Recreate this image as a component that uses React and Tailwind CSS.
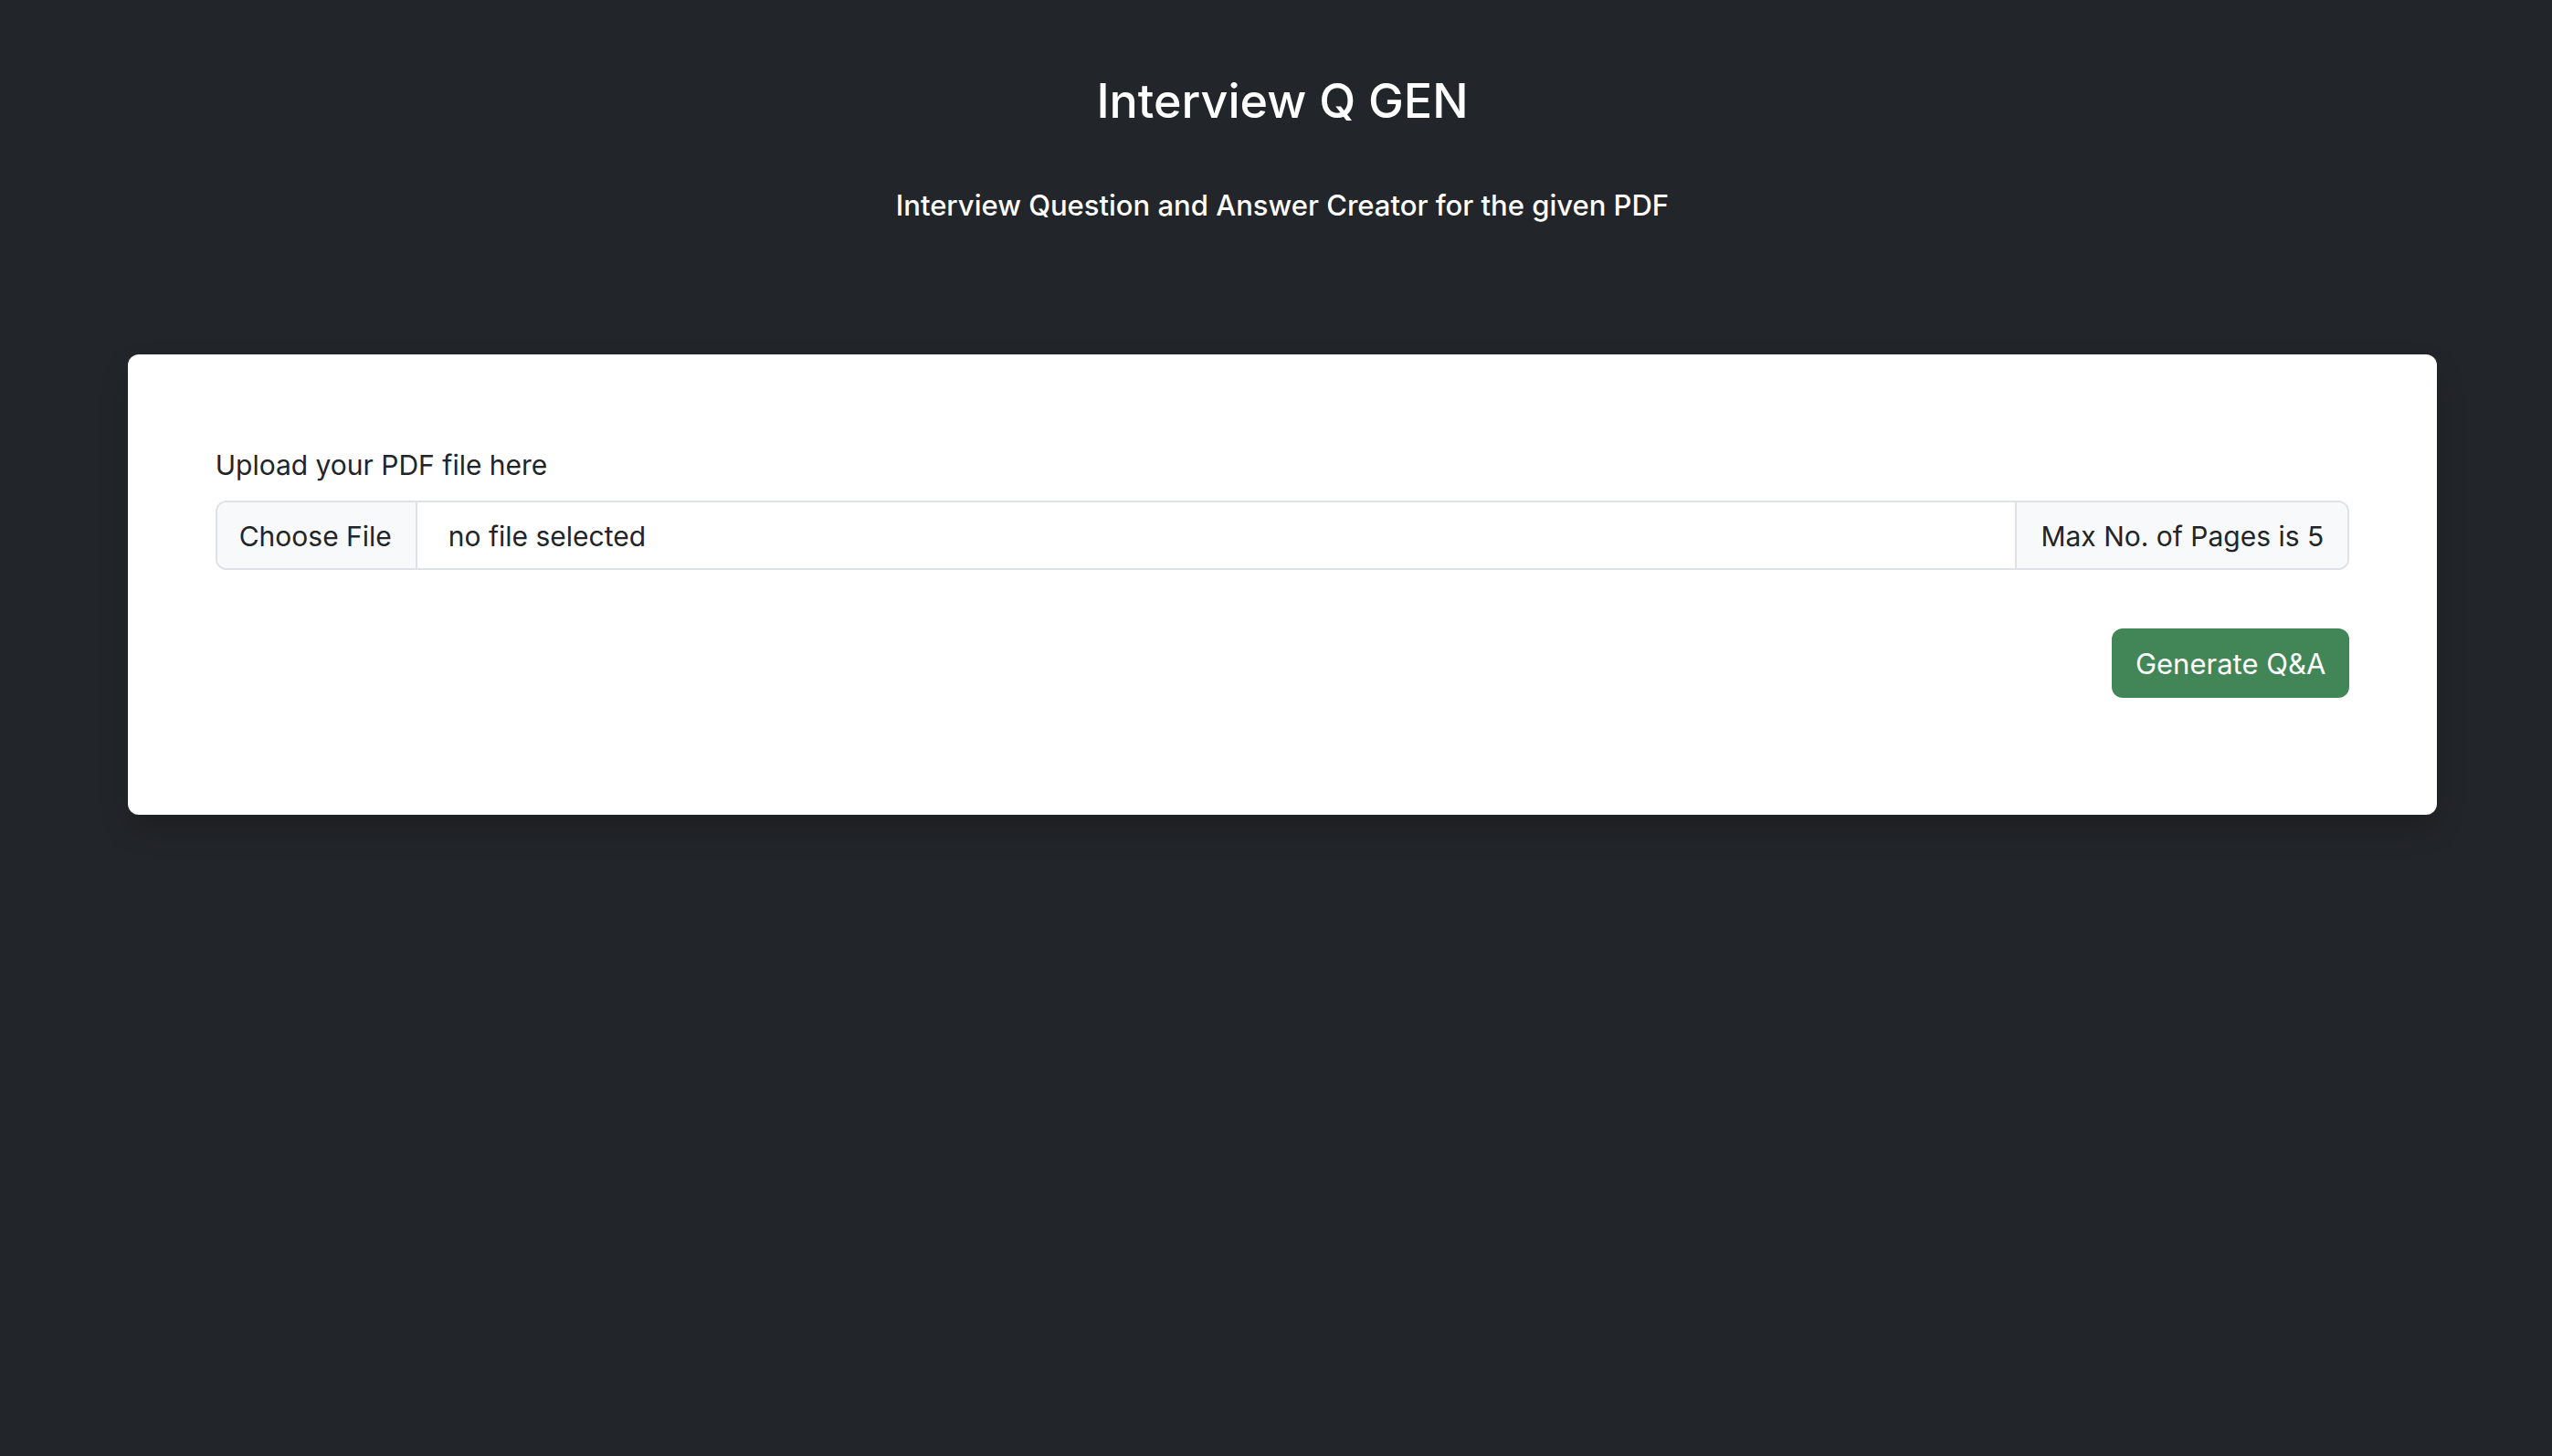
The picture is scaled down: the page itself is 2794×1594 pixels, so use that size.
import { useState } from "react";

export default function App() {
  const [fileName, setFileName] = useState("");

  return (
    <div className="min-h-screen bg-[#222529] pt-[79px] pr-[4.5%] pl-[5%] font-['Inter',sans-serif] text-[30px] leading-[48px] text-[#212529]">
      <header className="text-center font-medium text-white">
        <h1 className="text-[52px] leading-[64px]">Interview Q GEN</h1>
        <h2 className="mt-[58px] text-[31px] leading-[48px]">
          Interview Question and Answer Creator for the given PDF
        </h2>
      </header>

      <main className="mt-[139px] rounded-xl bg-white px-24 pt-[97px] pb-32 shadow-[0_16px_32px_rgba(0,0,0,0.15)]">
        <form onSubmit={(event) => event.preventDefault()}>
          <label htmlFor="pdf-file" className="block w-fit">
            Upload your PDF file here
          </label>
          <div className="mt-[15px] flex h-[76px] items-stretch overflow-hidden rounded-xl border-2 border-[#dee2e6]">
            <label htmlFor="pdf-file" className="flex grow cursor-pointer items-stretch">
              <span className="flex items-center border-r-2 border-[#dee2e6] bg-[#f8f9fa] pt-0.5 pr-[26px] pl-6">
                Choose File
              </span>
              <span className="flex items-center px-[34px] pt-0.5">
                {fileName || "no file selected"}
              </span>
              <input
                id="pdf-file"
                type="file"
                accept="application/pdf"
                className="sr-only"
                onChange={(event) => setFileName(event.target.files[0]?.name ?? "")}
              />
            </label>
            <span className="flex items-center border-l-2 border-[#dee2e6] bg-[#f8f9fa] px-[26px] pt-0.5">
              Max No. of Pages is 5
            </span>
          </div>
          <div className="mt-16 flex justify-end">
            <button
              type="submit"
              className="h-[76px] rounded-xl bg-[#428658] px-[26px] pt-0.5 text-[31px] text-white"
            >
              Generate Q&amp;A
            </button>
          </div>
        </form>
      </main>
    </div>
  );
}
